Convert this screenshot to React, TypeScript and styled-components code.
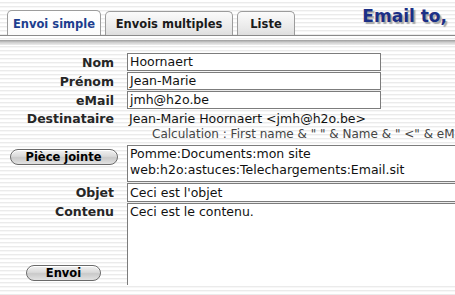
import styled, { createGlobalStyle } from "styled-components";

const GlobalStyle = createGlobalStyle`
  html, body {
    margin: 0;
    padding: 0;
    background: #fff;
  }
  body {
    font-family: "DejaVu Sans", Verdana, sans-serif;
  }
`;

const Page = styled.div`
  width: 455px;
  height: 295px;
  overflow: hidden;
  background: repeating-linear-gradient(
    to bottom,
    #ffffff 0px,
    #ffffff 2px,
    #ebebeb 2px,
    #ebebeb 3px,
    #f7f7f7 3px,
    #f7f7f7 4px
  );
`;

const Header = styled.div`
  display: flex;
  align-items: flex-end;
  height: 35px;
  padding-left: 7px;
  border-bottom: 1px solid #8a8a8a;
`;

const Tab = styled.div<{ $active?: boolean; $width: number }>`
  box-sizing: border-box;
  width: ${(p) => p.$width}px;
  height: ${(p) => (p.$active ? 25 : 24)}px;
  margin-right: 4px;
  display: flex;
  align-items: center;
  justify-content: center;
  border: 1px solid #9c9c9c;
  border-bottom: none;
  border-radius: 5px 5px 0 0;
  background: ${(p) =>
    p.$active
      ? "linear-gradient(#ffffff, #fafafa)"
      : "linear-gradient(#fbfbfb, #e9e9e9 70%, #dedede)"};
  font: bold 11.5px "DejaVu Sans", Verdana, sans-serif;
  color: ${(p) => (p.$active ? "#1d3e8e" : "#1a1a1a")};
  padding-top: 1px;
`;

const Title = styled.div`
  align-self: flex-start;
  margin: 6px 8px 0 auto;
  font: bold 17px "DejaVu Sans", Verdana, sans-serif;
  color: #1b2f86;
  text-shadow: 2px 2px 1px #a8a8a8;
  white-space: nowrap;
`;

const Shelf = styled.div`
  height: 5px;
  margin-top: 4px;
  background: linear-gradient(#9c9c9c, #cfcfcf 50%, #ececec);
`;

const Form = styled.div`
  display: grid;
  grid-template-columns: 127px 1fr;
  row-gap: 1px;
  margin-top: 8px;
`;

const Label = styled.div<{ $top?: boolean }>`
  display: flex;
  align-items: ${(p) => (p.$top ? "flex-start" : "center")};
  justify-content: flex-end;
  padding-right: 13px;
  padding-top: ${(p) => (p.$top ? 1 : 0)}px;
  font: bold 12.5px "DejaVu Sans", Verdana, sans-serif;
  color: #262626;
  white-space: nowrap;
`;

const LabelStack = styled.div`
  display: flex;
  flex-direction: column;
  justify-content: space-between;
  align-items: center;
  padding-bottom: 4px;
`;

const StackLabel = styled(Label)`
  align-self: stretch;
`;

const ButtonCell = styled.div`
  display: flex;
  justify-content: center;
  align-items: flex-start;
  padding-top: 4px;
`;

const Field = styled.div<{ $width?: number; $height: number; $open?: boolean }>`
  box-sizing: border-box;
  width: ${(p) => (p.$width ? `${p.$width}px` : "360px")};
  height: ${(p) => p.$height}px;
  border: 1px solid #7c7c7c;
  border-bottom: ${(p) => (p.$open ? "none" : "1px solid #7c7c7c")};
  background: #fff;
  padding: 0 2px;
  font: 12.5px/16px "DejaVu Sans", Verdana, sans-serif;
  color: #111;
  white-space: nowrap;
  display: flex;
  flex-direction: column;
  justify-content: ${(p) => (p.$height > 30 ? "flex-start" : "center")};
`;

const PlainValue = styled.div`
  height: 17px;
  padding-left: 2px;
  font: 12.5px/17px "DejaVu Sans", Verdana, sans-serif;
  color: #111;
  white-space: nowrap;
`;

const Calc = styled.div`
  height: 13px;
  margin-bottom: 3px;
  padding-left: 25px;
  font: 12px/13px "DejaVu Sans", Verdana, sans-serif;
  color: #444;
  white-space: nowrap;
`;

const PillButton = styled.button<{ $width: number }>`
  box-sizing: border-box;
  width: ${(p) => p.$width}px;
  height: 16px;
  padding: 0;
  border: 1px solid #6a6a6a;
  border-radius: 8px;
  background: linear-gradient(#f2f2f2, #dadada 45%, #c9c9c9 55%, #e2e2e2);
  box-shadow: inset 0 1px 0 #ffffff;
  font: bold 11.5px/14px "DejaVu Sans", Verdana, sans-serif;
  color: #000;
`;

export default function App() {
  return (
    <>
      <GlobalStyle />
      <Page>
        <Header>
          <Tab $active $width={94}>
            Envoi simple
          </Tab>
          <Tab $width={128}>Envois multiples</Tab>
          <Tab $width={58}>Liste</Tab>
          <Title>Email to,</Title>
        </Header>
        <Shelf />
        <Form>
          <Label>Nom</Label>
          <Field $width={254} $height={18}>
            Hoornaert
          </Field>
          <Label>Prénom</Label>
          <Field $width={254} $height={18}>
            Jean-Marie
          </Field>
          <Label>eMail</Label>
          <Field $width={254} $height={18}>
            jmh@h2o.be
          </Field>
          <Label>Destinataire</Label>
          <PlainValue>Jean-Marie Hoornaert &lt;jmh@h2o.be&gt;</PlainValue>
          <div />
          <Calc>
            Calculation : First name &amp; " " &amp; Name &amp; " &lt;" &amp; eMail &amp; "&gt;"
          </Calc>
          <ButtonCell>
            <PillButton $width={108}>Pièce jointe</PillButton>
          </ButtonCell>
          <Field $height={37}>
            <span>Pomme:Documents:mon site</span>
            <span>web:h2o:astuces:Telechargements:Email.sit</span>
          </Field>
          <Label>Objet</Label>
          <Field $height={19}>Ceci est l'objet</Field>
          <LabelStack>
            <StackLabel $top>Contenu</StackLabel>
            <PillButton $width={75}>Envoi</PillButton>
          </LabelStack>
          <Field $height={82} $open>
            Ceci est le contenu.
          </Field>
        </Form>
      </Page>
    </>
  );
}
